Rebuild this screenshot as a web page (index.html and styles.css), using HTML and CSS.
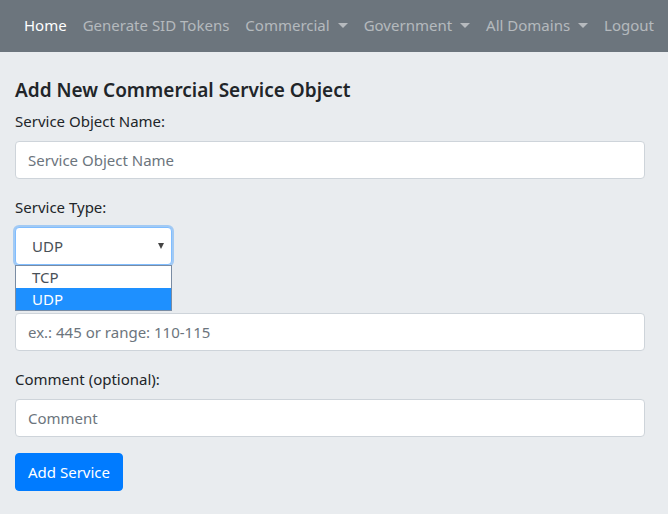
FILE: index.html
```html
<!DOCTYPE html>
<html lang="en">
<head>
<meta charset="utf-8">
<title>Add New Commercial Service Object</title>
<link rel="stylesheet" href="styles.css">
</head>
<body>
<nav class="navbar">
  <a class="nav-link active" href="#">Home</a>
  <a class="nav-link" href="#">Generate SID Tokens</a>
  <a class="nav-link dropdown" href="#">Commercial</a>
  <a class="nav-link dropdown" href="#">Government</a>
  <a class="nav-link dropdown" href="#">All Domains</a>
  <a class="nav-link" href="#">Logout</a>
</nav>
<main class="content">
  <h5 class="title">Add New Commercial Service Object</h5>
  <div class="form-group">
    <label class="label">Service Object Name:</label>
    <input class="form-control" type="text" placeholder="Service Object Name">
  </div>
  <div class="form-group">
    <label class="label">Service Type:</label>
    <div class="select-wrap">
      <div class="select"><span>UDP</span><span class="caret"></span></div>
      <ul class="options">
        <li class="option">TCP</li>
        <li class="option selected">UDP</li>
      </ul>
    </div>
  </div>
  <div class="form-group">
    <label class="label covered">Port(s):</label>
    <input class="form-control" type="text" placeholder="ex.: 445 or range: 110-115">
  </div>
  <div class="form-group">
    <label class="label">Comment (optional):</label>
    <input class="form-control" type="text" placeholder="Comment">
  </div>
  <button class="btn" type="button">Add Service</button>
</main>
</body>
</html>
```
FILE: styles.css
```css
* { box-sizing: border-box; }
html, body { margin: 0; padding: 0; }
body {
  font-family: "Segoe UI", "Noto Sans", "Open Sans", sans-serif;
  font-size: 15px;
  line-height: 24px;
  color: #212529;
  background: #fff;
}
.navbar {
  display: flex;
  align-items: center;
  height: 52px;
  padding: 0 16px 2px;
  background: #6c757d;
}
.nav-link {
  padding: 8px;
  color: rgba(255,255,255,0.5);
  text-decoration: none;
  display: flex;
  align-items: center;
  white-space: nowrap;
}
.nav-link.active { color: #fff; }
.nav-link.dropdown::after {
  content: "";
  display: inline-block;
  margin-left: 8px;
  border-top: 5px solid rgba(255,255,255,0.5);
  border-left: 5px solid transparent;
  border-right: 5px solid transparent;
}
.content {
  background: #e9ecef;
  padding: 26px 23px 23px 15px;
}
.title {
  margin: 0 0 7px;
  font-size: 19px;
  font-weight: 600;
  line-height: 24px;
}
.form-group { margin-bottom: 16px; }
.label {
  display: block;
  margin-bottom: 8px;
}
.label.covered { visibility: hidden; }
.form-control {
  display: block;
  width: 630px;
  height: 38px;
  padding: 6px 12px;
  font: inherit;
  color: #495057;
  background: #fff;
  border: 1px solid #ced4da;
  border-radius: 4px;
  outline: none;
}
.form-control::placeholder { color: #6c757d; opacity: 1; }
.select-wrap {
  position: relative;
  width: 157px;
  height: 38px;
}
.select {
  display: flex;
  align-items: center;
  justify-content: space-between;
  height: 38px;
  padding: 0 6px 0 16px;
  background: #fff;
  border: 1px solid #80bdff;
  border-radius: 4px;
  box-shadow: 0 0 0 2px rgba(0,123,255,0.3);
  color: #495057;
}
.caret {
  width: 0; height: 0;
  border-top: 6px solid #444;
  border-left: 3.5px solid transparent;
  border-right: 3.5px solid transparent;
  margin-right: 1px;
}
.options {
  position: absolute;
  left: 0;
  top: 38px;
  width: 157px;
  margin: 0;
  padding: 0;
  list-style: none;
  background: #fff;
  border: 1px solid #7a8ca3;
  z-index: 2;
}
.option {
  height: 22px;
  line-height: 22px;
  padding-left: 16px;
  color: #495057;
}
.option.selected { background: #1e90ff; color: #fff; }
.btn {
  display: block;
  height: 38px;
  padding: 0 12px;
  font: inherit;
  font-size: 15px;
  color: #fff;
  background: #007bff;
  border: 1px solid #007bff;
  border-radius: 4px;
}
```
